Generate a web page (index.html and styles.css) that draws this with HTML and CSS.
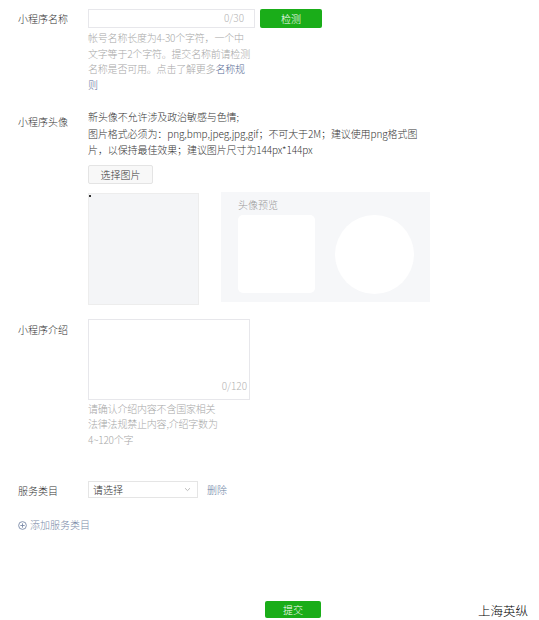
FILE: index.html
```html
<!DOCTYPE html>
<html>
<head>
	<title>小程序信息</title>
	<link rel="stylesheet" href="styles.css">
</head>
<body>
	<div class="form">
		<div class="row row-name">
			<label class="label">小程序名称</label>
			<div class="field">
				<div class="name-line">
					<div class="input-box"><span class="counter">0/30</span></div>
					<button class="btn-green">检测</button>
				</div>
				<p class="hint">帐号名称长度为4-30个字符，一个中<br>文字等于2个字符。提交名称前请检测<br>名称是否可用。点击了解更多<a href="#">名称规<br>则</a></p>
			</div>
		</div>

		<div class="row row-avatar">
			<label class="label">小程序头像</label>
			<div class="field">
				<p class="desc">新头像不允许涉及政治敏感与色情;<br>图片格式必须为：png,bmp,jpeg,jpg,gif；不可大于2M；建议使用png格式图<br>片，以保持最佳效果；建议图片尺寸为144px*144px</p>
				<button class="btn-plain">选择图片</button>
				<div class="avatar-area">
					<div class="crop-box"><span class="dot"></span></div>
					<div class="preview">
						<div class="preview-title">头像预览</div>
						<div class="preview-shapes">
							<div class="square"></div>
							<div class="circle"></div>
						</div>
					</div>
				</div>
			</div>
		</div>

		<div class="row row-intro">
			<label class="label">小程序介绍</label>
			<div class="field">
				<div class="textarea-box"><span class="counter">0/120</span></div>
				<p class="hint">请确认介绍内容不含国家相关<br>法律法规禁止内容,介绍字数为<br>4~120个字</p>
			</div>
		</div>

		<div class="row row-category">
			<label class="label">服务类目</label>
			<div class="field category-line">
				<div class="select-box">
					<span>请选择</span>
					<svg width="7" height="5" viewBox="0 0 7 5"><path d="M1 1.2 L3.5 3.6 L6 1.2" fill="none" stroke="#b5b5b5" stroke-width="0.9"/></svg>
				</div>
				<a href="#" class="link-del">删除</a>
			</div>
		</div>

		<a href="#" class="add-category">
			<svg width="9" height="9" viewBox="0 0 10 10"><circle cx="5" cy="5" r="4.3" fill="none" stroke="#7a8aa8" stroke-width="1"/><path d="M2.6 5 H7.4 M5 2.6 V7.4" stroke="#7a8aa8" stroke-width="1"/></svg>
			添加服务类目
		</a>

		<div class="footer">
			<button class="btn-green btn-submit">提交</button>
			<span class="company">上海英纵</span>
		</div>
	</div>
</body>
</html>
```

FILE: styles.css
```css
* {
	margin: 0;
	padding: 0;
	box-sizing: border-box;
}

body {
	font-family: "Noto Sans CJK SC", "Noto Sans", sans-serif;
	font-size: 10px;
	font-weight: 300;
	color: #353535;
	background: #fff;
}

a {
	color: #576b95;
	text-decoration: none;
}

button {
	font-weight: 300;
}

.form {
	padding: 9px 0 0 18px;
}

.row {
	display: flex;
}

.label {
	width: 70px;
	flex-shrink: 0;
	line-height: 19px;
	color: #353535;
}

.field {
	flex: 1;
}

/* name */
.name-line {
	display: flex;
	align-items: center;
}

.input-box {
	width: 167px;
	height: 19px;
	border: 1px solid #e7e7eb;
	position: relative;
}

.counter {
	position: absolute;
	right: 10px;
	bottom: 1px;
	line-height: 16px;
	color: #b2b2b2;
}

.btn-green {
	background: #1aad19;
	color: #fff;
	border: none;
	border-radius: 2px;
	font-family: inherit;
	font-size: 10px;
	width: 62px;
	height: 19px;
	margin-left: 5px;
}

.hint {
	margin-top: 2px;
	line-height: 15.5px;
	color: #a8a8a8;
	letter-spacing: -0.2px;
}

/* avatar */
.row-avatar {
	margin-top: 17px;
}

.row-avatar .label {
	padding-top: 5px;
	line-height: 16px;
}

.desc {
	line-height: 16.5px;
	letter-spacing: -0.1px;
}

.btn-plain {
	margin-top: 6px;
	width: 65px;
	height: 19px;
	background: #f8f8f8;
	border: 1px solid #e4e4e4;
	border-radius: 2px;
	font-family: inherit;
	font-size: 10px;
	color: #353535;
}

.avatar-area {
	display: flex;
	align-items: flex-start;
	margin-top: 8px;
}

.crop-box {
	width: 111px;
	height: 112px;
	margin-top: 1px;
	background: #f4f5f7;
	border: 1px solid #ededed;
	position: relative;
}

.dot {
	position: absolute;
	left: 0;
	top: 1px;
	width: 2px;
	height: 2px;
	background: #333;
}

.preview {
	margin-left: 22px;
	width: 209px;
	height: 110px;
	background: #f6f7f9;
	padding: 6px 16px 0 17px;
}

.preview-title {
	color: #9a9a9a;
	line-height: 14px;
}

.preview-shapes {
	display: flex;
	justify-content: space-between;
	margin-top: 3px;
}

.square {
	width: 77px;
	height: 78px;
	background: #fff;
	border-radius: 5px;
}

.circle {
	width: 79px;
	height: 79px;
	background: #fff;
	border-radius: 50%;
}

/* intro */
.row-intro {
	margin-top: 14px;
}

.row-intro .label {
	padding-top: 1px;
}

.textarea-box {
	width: 162px;
	height: 81px;
	border: 1px solid #e7e7eb;
	position: relative;
}

.textarea-box .counter {
	right: 2px;
	bottom: 5px;
}

.row-intro .hint {
	margin-top: 1px;
}

/* category */
.row-category {
	margin-top: 31px;
}

.row-category .label {
	padding-top: 3px;
}

.category-line {
	display: flex;
	align-items: center;
}

.select-box {
	width: 110px;
	height: 17px;
	border: 1px solid #e5e5e5;
	display: flex;
	align-items: center;
	justify-content: space-between;
	padding: 0 6px 0 4px;
	color: #353535;
}

.link-del {
	margin-left: 9px;
	color: #6c7fa3;
}

.add-category {
	display: inline-flex;
	align-items: center;
	gap: 3px;
	margin-top: 18px;
	color: #7a8aa8;
	line-height: 14px;
}

/* footer */
.footer {
	display: flex;
	align-items: center;
	margin-top: 66px;
	padding-left: 247px;
}

.btn-submit {
	width: 56px;
	height: 17px;
	margin-left: 0;
}

.company {
	margin-left: 157px;
	margin-top: 2px;
	font-size: 12.5px;
	font-weight: 300;
	color: #000;
}
```
